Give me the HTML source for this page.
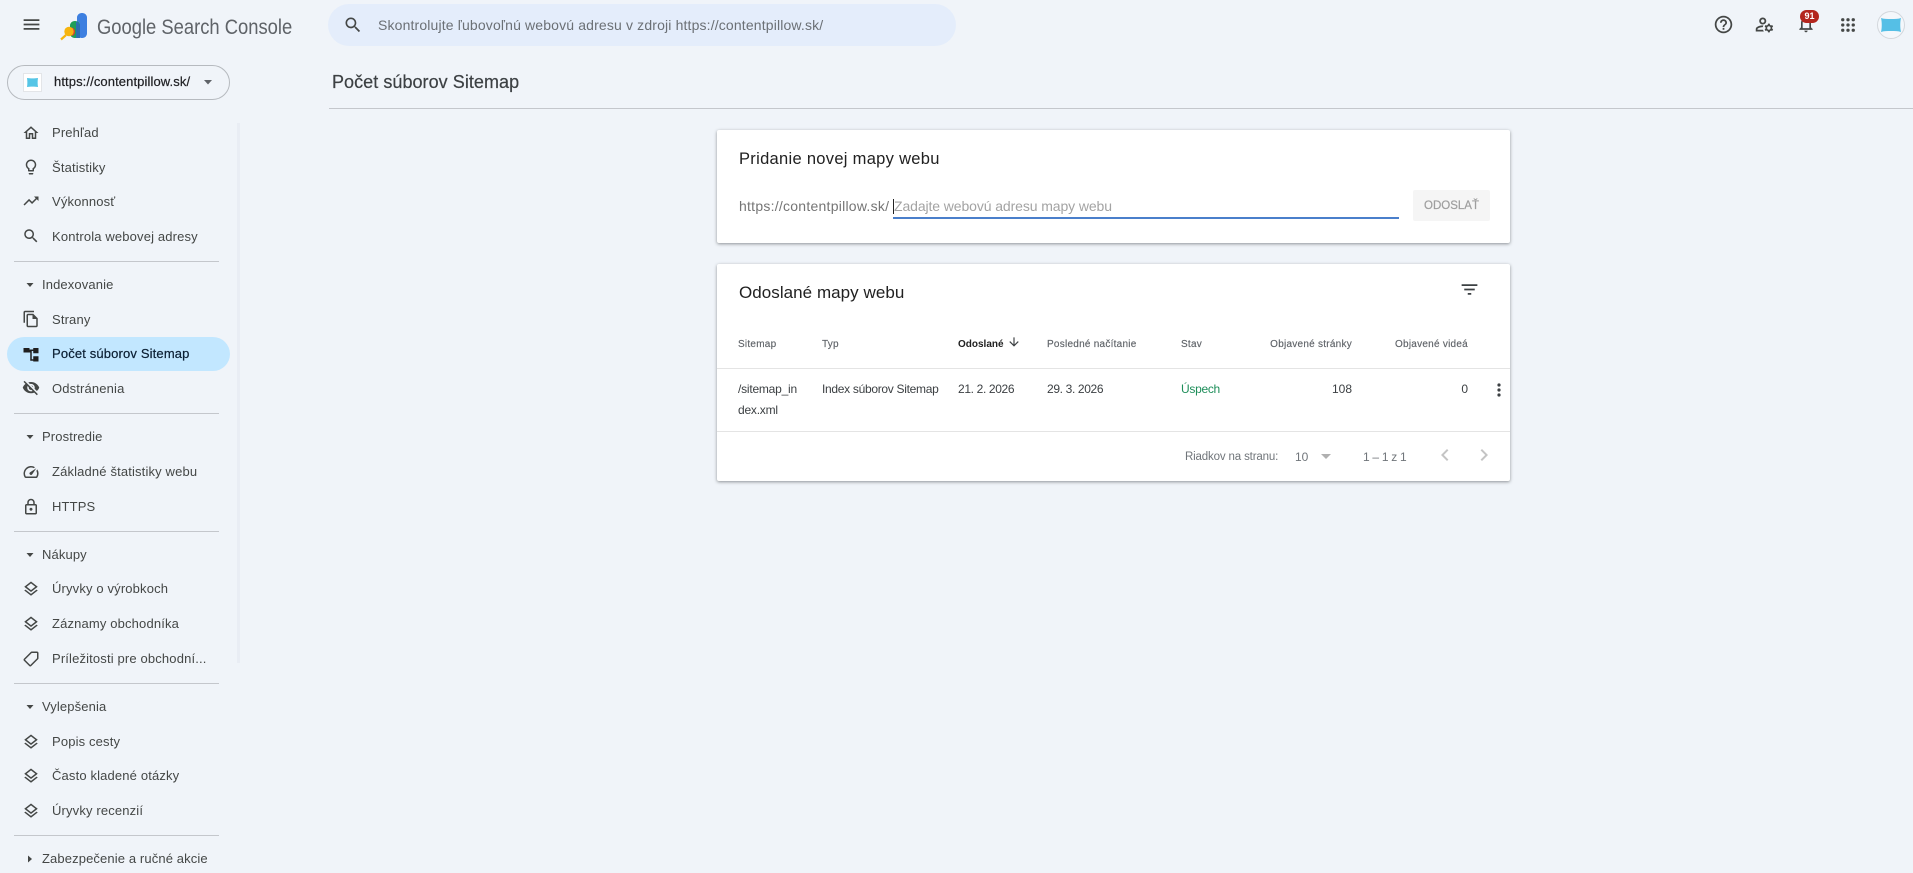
<!DOCTYPE html>
<html lang="sk"><head><meta charset="utf-8"><title>Počet súborov Sitemap</title>
<style>
html,body{margin:0;padding:0;width:1913px;height:873px;overflow:hidden;background:#f0f4f9;font-family:"Liberation Sans",sans-serif}
.t{position:absolute;white-space:nowrap;line-height:20px;height:20px}
.n{left:52px;font-size:13px;color:#444746;letter-spacing:.15px}
.s{left:42px;font-size:13px;color:#444746;letter-spacing:.12px}
.d{position:absolute;left:14px;width:205px;height:1px;background:#c4c7cc}
svg{position:absolute;display:block}
.i{left:22px;width:18px;height:18px;margin-top:1px;fill:#444746}
.a{left:25px;width:10px;height:10px;fill:#444746}
.card{position:absolute;left:717px;width:793px;background:#fff;box-shadow:0 1px 3px rgba(60,64,67,.55);border-radius:2px}
.h{font-size:10px;color:#5f6368;letter-spacing:.25px;-webkit-text-stroke:.15px #5f6368}
.c{font-size:12px;color:#3c4043;letter-spacing:-.3px}
.p{font-size:11.5px;color:#70757a;letter-spacing:-.15px}
</style></head><body>

<svg style="left:20.500px;top:13.500px;width:21px;height:21px;fill:#444746" viewBox="0 0 24 24"><path d="M3 18h18v-2H3v2zm0-5h18v-2H3v2zm0-7v2h18V6H3z"/></svg>
<svg style="left:59px;top:12px;width:30px;height:30px" viewBox="0 0 30 30">
<rect x="18" y="1" width="10" height="25" rx="4.500" fill="#3d7fe0"/>
<rect x="11" y="9" width="10" height="17" rx="4.500" fill="#1e9e58"/>
<path d="M17 9.500c2.500 1 4 2.500 4 5V26h-4z" fill="#2b6fb0"/>
<path d="M13 15.500a4.500 4.500 0 0 1 0 8.500z" fill="#d9402f"/>
<circle cx="10" cy="19.500" r="4.700" fill="#f6b40e"/>
<path d="M7 23L2 27.500" stroke="#f6b40e" stroke-width="2.200"/>
</svg>
<div class="t" style="left:97px;top:16px;font-size:21.500px;line-height:22px;height:24px;color:#5f6368;transform:scaleX(.855);transform-origin:0 50%">Google Search Console</div>

<div style="position:absolute;left:328px;top:4px;width:628px;height:42px;border-radius:21px;background:#e4edfb"></div>
<svg style="left:343px;top:15px;width:20px;height:20px;fill:#444746" viewBox="0 0 24 24"><path d="M15.500 14h-.79l-.28-.27C15.410 12.590 16 11.110 16 9.500 16 5.910 13.090 3 9.500 3S3 5.910 3 9.500 5.910 16 9.500 16c1.610 0 3.090-.59 4.230-1.570l.27.280v.790l5 4.990L20.490 19l-4.990-5zm-6 0C7.010 14 5 11.990 5 9.500S7.010 5 9.500 5 14 7.010 14 9.500 11.990 14 9.500 14z"/></svg>
<div class="t" style="left:378px;top:15px;font-size:14px;color:#6b7075;letter-spacing:.15px">Skontrolujte ľubovoľnú webovú adresu v zdroji https://contentpillow.sk/</div>

<svg style="left:1712.500px;top:14px;width:21px;height:21px;fill:#444746" viewBox="0 0 24 24"><path d="M11 18h2v-2h-2v2zm1-16C6.480 2 2 6.480 2 12s4.480 10 10 10 10-4.480 10-10S17.520 2 12 2zm0 18c-4.410 0-8-3.590-8-8s3.590-8 8-8 8 3.590 8 8-3.590 8-8 8zm0-14c-2.210 0-4 1.790-4 4h2c0-1.100.9-2 2-2s2 .9 2 2c0 2-3 1.750-3 5h2c0-2.250 3-2.500 3-5 0-2.210-1.790-4-4-4z"/></svg>
<svg style="left:1753.500px;top:14px;width:21px;height:21px;fill:#444746" viewBox="0 0 24 24"><path d="M4 18v-.65c0-.34.160-.66.410-.81C6.100 15.530 8.030 15 10 15c.03 0 .05 0 .08.01.1-.7.3-1.370.59-1.980-.22-.02-.44-.03-.67-.03-2.420 0-4.680.67-6.610 1.820-.88.52-1.390 1.500-1.390 2.530V20h9.260c-.42-.6-.75-1.280-.97-2H4zM10 12c2.210 0 4-1.790 4-4s-1.790-4-4-4-4 1.790-4 4 1.790 4 4 4zm0-6c1.100 0 2 .9 2 2s-.9 2-2 2-2-.9-2-2 .9-2 2-2z"/><path d="M20.750 16c0-.22-.03-.42-.06-.63l1.140-1.010-1-1.730-1.450.49c-.32-.27-.68-.48-1.080-.63L18 11h-2l-.3 1.490c-.4.150-.76.360-1.080.63l-1.450-.49-1 1.730 1.140 1.010c-.03.21-.06.41-.06.63s.03.420.06.630l-1.140 1.010 1 1.730 1.450-.49c.32.270.680.480 1.080.630L16 21h2l.3-1.490c.4-.15.760-.36 1.080-.63l1.450.49 1-1.730-1.140-1.010c.03-.21.06-.41.06-.63zM17 18c-1.100 0-2-.9-2-2s.9-2 2-2 2 .9 2 2-.9 2-2 2z"/></svg>
<svg style="left:1796px;top:14px;width:20px;height:20px;fill:#444746" viewBox="0 0 24 24"><path d="M12 22c1.100 0 2-.9 2-2h-4c0 1.100.9 2 2 2zm6-6v-5c0-3.070-1.630-5.640-4.500-6.320V4c0-.83-.67-1.500-1.500-1.500s-1.500.67-1.500 1.500v.68C7.640 5.360 6 7.920 6 11v5l-2 2v1h16v-1l-2-2zm-2 1H8v-6c0-2.480 1.510-4.500 4-4.500s4 2.020 4 4.500v6z"/></svg>
<div style="position:absolute;left:1800px;top:10px;width:19px;height:13px;border-radius:7px;background:#b3261e;color:#fff;font-size:9px;line-height:13px;text-align:center;font-weight:700">91</div>
<svg style="left:1841px;top:18px;width:14px;height:14px;fill:#444746" viewBox="0 0 16 16"><g><circle cx="2" cy="2" r="1.900"/><circle cx="8" cy="2" r="1.900"/><circle cx="14" cy="2" r="1.900"/><circle cx="2" cy="8" r="1.900"/><circle cx="8" cy="8" r="1.900"/><circle cx="14" cy="8" r="1.900"/><circle cx="2" cy="14" r="1.900"/><circle cx="8" cy="14" r="1.900"/><circle cx="14" cy="14" r="1.900"/></g></svg>
<div style="position:absolute;left:1877px;top:11px;width:26px;height:26px;border-radius:50%;background:#f4f7fb;border:1px solid #d3d7dc"></div>
<svg style="left:1880px;top:17px;width:22px;height:16px" viewBox="0 0 22 16"><path d="M1 1c3 1 6 1 10 1s7 0 10-1c-1 4-1 10 0 14-3-1-6-1-10-1s-7 0-10 1c1-4 1-10 0-14z" fill="#55bfe6"/></svg>

<div style="position:absolute;left:7px;top:65px;width:221px;height:33px;border:1px solid #b6babf;border-radius:18px"></div>
<div style="position:absolute;left:23px;top:73px;width:19px;height:19px;background:#fff;border:1px solid #e3e5e8;box-sizing:border-box"></div>
<svg style="left:27px;top:78px;width:11px;height:9px" viewBox="0 0 11 9"><path d="M0 0c3 .5 8 .5 11 0-.5 3-.5 6 0 9-3-.5-8-.5-11 0 .5-3 .5-6 0-9z" fill="#55c5e6"/></svg>
<div class="t" style="left:54px;top:72px;font-size:13px;color:#202124;letter-spacing:.1px;-webkit-text-stroke:.2px #202124">https://contentpillow.sk/</div>
<svg style="left:204px;top:80px;width:8px;height:4.500px;fill:#5f6368" viewBox="0 0 9 5"><path d="M0 0h9L4.500 5z"/></svg>

<div style="position:absolute;left:237px;top:123px;width:3px;height:540px;background:#e9edf4"></div>
<div style="position:absolute;left:7px;top:337px;width:223px;height:34px;border-radius:17px;background:#c2e7ff"></div>

<svg class="i" style="top:123px" viewBox="0 0 24 24"><path d="M12 5.690l5 4.500V18h-2v-6H9v6H7v-7.810l5-4.500M12 3L2 12h3v8h6v-6h2v6h6v-8h3L12 3z"/></svg>
<div class="t n" style="top:123px">Prehľad</div>
<svg class="i" style="top:157px" viewBox="0 0 24 24"><path d="M9 21c0 .55.45 1 1 1h4c.55 0 1-.45 1-1v-1H9v1zm3-19C8.140 2 5 5.140 5 9c0 2.380 1.190 4.470 3 5.740V17c0 .55.45 1 1 1h6c.55 0 1-.45 1-1v-2.260c1.810-1.270 3-3.360 3-5.740 0-3.860-3.140-7-7-7zm2.850 11.100l-.85.6V16h-4v-2.300l-.85-.6C7.800 12.160 7 10.630 7 9c0-2.760 2.240-5 5-5s5 2.240 5 5c0 1.630-.8 3.160-2.150 4.100z"/></svg>
<div class="t n" style="top:158px">Štatistiky</div>
<svg class="i" style="top:191px" viewBox="0 0 24 24"><path d="M16 6l2.290 2.290-4.880 4.880-4-4L2 16.590 3.410 18l6-6 4 4 6.300-6.290L22 12V6z"/></svg>
<div class="t n" style="top:192px">Výkonnosť</div>
<svg class="i" style="top:226px" viewBox="0 0 24 24"><path d="M15.500 14h-.79l-.28-.27C15.410 12.590 16 11.110 16 9.500 16 5.910 13.090 3 9.500 3S3 5.910 3 9.500 5.910 16 9.500 16c1.610 0 3.090-.59 4.230-1.570l.27.280v.790l5 4.990L20.490 19l-4.990-5zm-6 0C7.010 14 5 11.990 5 9.500S7.010 5 9.500 5 14 7.010 14 9.500 11.990 14 9.500 14z"/></svg>
<div class="t n" style="top:227px">Kontrola webovej adresy</div>
<div class="d" style="top:261px"></div>

<svg class="a" style="top:280px" viewBox="0 0 10 10"><path d="M1.500 3h7L5 7z"/></svg>
<div class="t s" style="top:275px">Indexovanie</div>
<svg class="i" style="top:309px" viewBox="0 0 24 24"><path d="M16 1H4c-1.100 0-2 .9-2 2v14h2V3h12V1zm-1 4H8c-1.100 0-1.990.9-1.990 2L6 21c0 1.100.89 2 1.990 2H19c1.100 0 2-.9 2-2V11l-6-6zM8 21V7h6v5h5v9H8z"/></svg>
<div class="t n" style="top:310px">Strany</div>
<svg class="i" style="top:344px;fill:#1f1f1f" viewBox="0 0 24 24"><path d="M2 4h8v6H2zM15 4h7v7h-7zM15 15h7v7h-7zM10 6h5v2h-2v11h2v2h-4V10h-1z"/></svg>
<div class="t n" style="top:344px;color:#0b1f33;-webkit-text-stroke:.2px #0b1f33">Počet súborov Sitemap</div>
<svg class="i" style="top:378px" viewBox="0 0 24 24"><path d="M12 6.500c2.760 0 5 2.240 5 5 0 .51-.1 1-.24 1.460l3.060 3.060c1.390-1.230 2.490-2.770 3.180-4.530C21.270 7.110 17 4 12 4c-1.270 0-2.490.2-3.640.57l2.170 2.170c.47-.14.96-.24 1.470-.24zM3.420 2.450L2.010 3.870l2.680 2.680C3.060 7.830 1.770 9.530 1 11.500 2.730 15.890 7 19 12 19c1.520 0 2.970-.3 4.310-.82l3.430 3.430 1.410-1.410L3.420 2.450zM12 16.500c-2.760 0-5-2.240-5-5 0-.77.180-1.500.490-2.140l1.570 1.570c-.03.18-.06.37-.06.57 0 1.660 1.340 3 3 3 .2 0 .38-.03.57-.07L14.140 16c-.65.32-1.370.5-2.140.5zm2.970-5.330c-.15-1.400-1.250-2.490-2.640-2.640l2.640 2.640z"/></svg>
<div class="t n" style="top:379px">Odstránenia</div>
<div class="d" style="top:413px"></div>

<svg class="a" style="top:432px" viewBox="0 0 10 10"><path d="M1.500 3h7L5 7z"/></svg>
<div class="t s" style="top:427px">Prostredie</div>
<svg class="i" style="top:462px" viewBox="0 0 24 24"><path d="M20.380 8.570l-1.230 1.850a8 8 0 0 1-.22 7.580H5.070A8 8 0 0 1 15.580 6.850l1.850-1.230A10 10 0 0 0 3.350 19a2 2 0 0 0 1.720 1h13.850a2 2 0 0 0 1.740-1 10 10 0 0 0-.27-10.440zm-9.790 6.840a2 2 0 0 0 2.830 0l5.660-8.490-8.490 5.660a2 2 0 0 0 0 2.830z"/></svg>
<div class="t n" style="top:462px">Základné štatistiky webu</div>
<svg class="i" style="top:497px" viewBox="0 0 24 24"><path d="M18 8h-1V6c0-2.760-2.240-5-5-5S7 3.240 7 6v2H6c-1.100 0-2 .9-2 2v10c0 1.100.9 2 2 2h12c1.100 0 2-.9 2-2V10c0-1.100-.9-2-2-2zM9 6c0-1.660 1.340-3 3-3s3 1.340 3 3v2H9V6zm9 14H6V10h12v10zm-6-3c1.100 0 2-.9 2-2s-.9-2-2-2-2 .9-2 2 .9 2 2 2z"/></svg>
<div class="t n" style="top:497px">HTTPS</div>
<div class="d" style="top:531px"></div>

<svg class="a" style="top:550px" viewBox="0 0 10 10"><path d="M1.500 3h7L5 7z"/></svg>
<div class="t s" style="top:545px">Nákupy</div>
<svg class="i" style="top:579px" viewBox="0 0 24 24"><path d="M11.990 18.540l-7.370-5.730L3 14.070l9 7 9-7-1.630-1.270-7.380 5.740zM12 16l7.360-5.730L21 9l-9-7-9 7 1.630 1.270L12 16zm0-11.470L17.740 9 12 13.470 6.260 9 12 4.530z"/></svg>
<div class="t n" style="top:579px">Úryvky o výrobkoch</div>
<svg class="i" style="top:614px" viewBox="0 0 24 24"><path d="M11.990 18.540l-7.370-5.730L3 14.070l9 7 9-7-1.630-1.270-7.380 5.740zM12 16l7.360-5.730L21 9l-9-7-9 7 1.630 1.270L12 16zm0-11.470L17.740 9 12 13.470 6.260 9 12 4.530z"/></svg>
<div class="t n" style="top:614px">Záznamy obchodníka</div>
<svg class="i" style="top:649px" viewBox="0 0 24 24"><path transform="rotate(90 12 12)" d="M21.410 11.580l-9-9C12.050 2.220 11.550 2 11 2H4c-1.100 0-2 .9-2 2v7c0 .55.220 1.050.590 1.420l9 9c.36.360.860.580 1.410.580s1.050-.22 1.410-.59l7-7c.37-.36.590-.86.590-1.410s-.23-1.060-.59-1.420zM13 20.010L4 11V4h7v-.01l9 9-7 7.020z"/></svg>
<div class="t n" style="top:649px">Príležitosti pre obchodní...</div>
<div class="d" style="top:683px"></div>

<svg class="a" style="top:702px" viewBox="0 0 10 10"><path d="M1.500 3h7L5 7z"/></svg>
<div class="t s" style="top:697px">Vylepšenia</div>
<svg class="i" style="top:732px" viewBox="0 0 24 24"><path d="M11.990 18.540l-7.370-5.730L3 14.070l9 7 9-7-1.630-1.270-7.380 5.740zM12 16l7.360-5.730L21 9l-9-7-9 7 1.630 1.270L12 16zm0-11.470L17.740 9 12 13.470 6.260 9 12 4.530z"/></svg>
<div class="t n" style="top:732px">Popis cesty</div>
<svg class="i" style="top:766px" viewBox="0 0 24 24"><path d="M11.990 18.540l-7.370-5.730L3 14.070l9 7 9-7-1.630-1.270-7.380 5.740zM12 16l7.360-5.730L21 9l-9-7-9 7 1.630 1.270L12 16zm0-11.470L17.740 9 12 13.470 6.260 9 12 4.530z"/></svg>
<div class="t n" style="top:766px">Často kladené otázky</div>
<svg class="i" style="top:801px" viewBox="0 0 24 24"><path d="M11.990 18.540l-7.370-5.730L3 14.070l9 7 9-7-1.630-1.270-7.380 5.740zM12 16l7.360-5.730L21 9l-9-7-9 7 1.630 1.270L12 16zm0-11.470L17.740 9 12 13.470 6.260 9 12 4.530z"/></svg>
<div class="t n" style="top:801px">Úryvky recenzií</div>
<div class="d" style="top:835px"></div>

<svg class="a" style="top:854px" viewBox="0 0 10 10"><path d="M3 1.500v7L7 5z"/></svg>
<div class="t s" style="top:849px">Zabezpečenie a ručné akcie</div>

<div class="t" style="left:332px;top:72px;font-size:18px;color:#3c4043;letter-spacing:.05px;-webkit-text-stroke:.2px #3c4043">Počet súborov Sitemap</div>
<div style="position:absolute;left:329px;top:108px;width:1584px;height:1px;background:#c4c7cc"></div>

<div class="card" style="top:130px;height:113px"></div>
<div class="t" style="left:739px;top:149px;font-size:16.500px;color:#212121;letter-spacing:.3px">Pridanie novej mapy webu</div>
<div class="t" style="left:739px;top:196px;font-size:14px;color:#757575;letter-spacing:.25px">https://contentpillow.sk/</div>
<div class="t" style="left:894px;top:196px;font-size:14px;color:#a3a3a3;letter-spacing:-.1px">Zadajte webovú adresu mapy webu</div>
<div style="position:absolute;left:893px;top:199px;width:1px;height:15px;background:#222"></div>
<div style="position:absolute;left:893px;top:217px;width:506px;height:2px;background:#4a7fcb"></div>
<div style="position:absolute;left:1413px;top:190px;width:77px;height:31px;background:#f5f5f5;border-radius:2px"></div>
<div class="t" style="left:1413px;width:77px;text-align:center;top:196px;font-size:11.500px;color:#9e9e9e;-webkit-text-stroke:.2px #9e9e9e">ODOSLAŤ</div>

<div class="card" style="top:264px;height:217px"></div>
<div class="t" style="left:739px;top:283px;font-size:17px;color:#212121;letter-spacing:.05px">Odoslané mapy webu</div>
<svg style="left:1458.500px;top:278.500px;width:21px;height:21px;fill:#3c4043" viewBox="0 0 24 24"><path d="M10 18h4v-2h-4v2zM3 6v2h18V6H3zm3 7h12v-2H6v2z"/></svg>

<div class="t h" style="left:738px;top:335px">Sitemap</div>
<div class="t h" style="left:822px;top:335px">Typ</div>
<div class="t h" style="left:958px;top:335px;color:#212121;font-weight:700;letter-spacing:0;-webkit-text-stroke:0">Odoslané</div>
<svg style="left:1007px;top:335px;width:14px;height:14px;fill:#3c4043" viewBox="0 0 24 24"><path d="M20 12l-1.410-1.410L13 16.170V4h-2v12.170l-5.580-5.590L4 12l8 8 8-8z"/></svg>
<div class="t h" style="left:1047px;top:335px">Posledné načítanie</div>
<div class="t h" style="left:1181px;top:335px">Stav</div>
<div class="t h" style="right:561px;top:335px">Objavené stránky</div>
<div class="t h" style="right:445px;top:335px">Objavené videá</div>
<div style="position:absolute;left:717px;top:368px;width:793px;height:1px;background:#e4e4e4"></div>

<div class="t c" style="left:738px;top:379px;letter-spacing:-.22px">/sitemap_in</div>
<div class="t c" style="left:738px;top:400px;letter-spacing:-.22px">dex.xml</div>
<div class="t c" style="left:822px;top:379px">Index súborov Sitemap</div>
<div class="t c" style="left:958px;top:379px;letter-spacing:-.35px">21. 2. 2026</div>
<div class="t c" style="left:1047px;top:379px;letter-spacing:-.35px">29. 3. 2026</div>
<div class="t c" style="left:1181px;top:379px;color:#1e8e5a">Úspech</div>
<div class="t c" style="right:561px;top:379px;letter-spacing:0">108</div>
<div class="t c" style="right:445px;top:379px;letter-spacing:0">0</div>
<svg style="left:1497px;top:383px;width:4px;height:14px;fill:#3c4043" viewBox="0 0 4 14"><circle cx="2" cy="2" r="1.600"/><circle cx="2" cy="7" r="1.600"/><circle cx="2" cy="12" r="1.600"/></svg>
<div style="position:absolute;left:717px;top:431px;width:793px;height:1px;background:#e4e4e4"></div>

<div class="t p" style="left:1185px;top:447px">Riadkov na stranu:</div>
<div class="t p" style="left:1295px;top:447px;font-size:12px;letter-spacing:0">10</div>
<svg style="left:1321px;top:454px;width:10px;height:5px;fill:#b0b0b0" viewBox="0 0 10 5"><path d="M0 0h10L5 5z"/></svg>
<div class="t p" style="left:1363px;top:447px;font-size:12px;letter-spacing:-.3px">1 – 1 z 1</div>
<svg style="left:1433px;top:443px;width:24px;height:24px;fill:#c4c4c4" viewBox="0 0 24 24"><path d="M15.410 7.410L14 6l-6 6 6 6 1.410-1.410L10.830 12z"/></svg>
<svg style="left:1472px;top:443px;width:24px;height:24px;fill:#c4c4c4" viewBox="0 0 24 24"><path d="M8.590 16.590L10 18l6-6-6-6-1.410 1.410L13.170 12z"/></svg>
</body></html>
